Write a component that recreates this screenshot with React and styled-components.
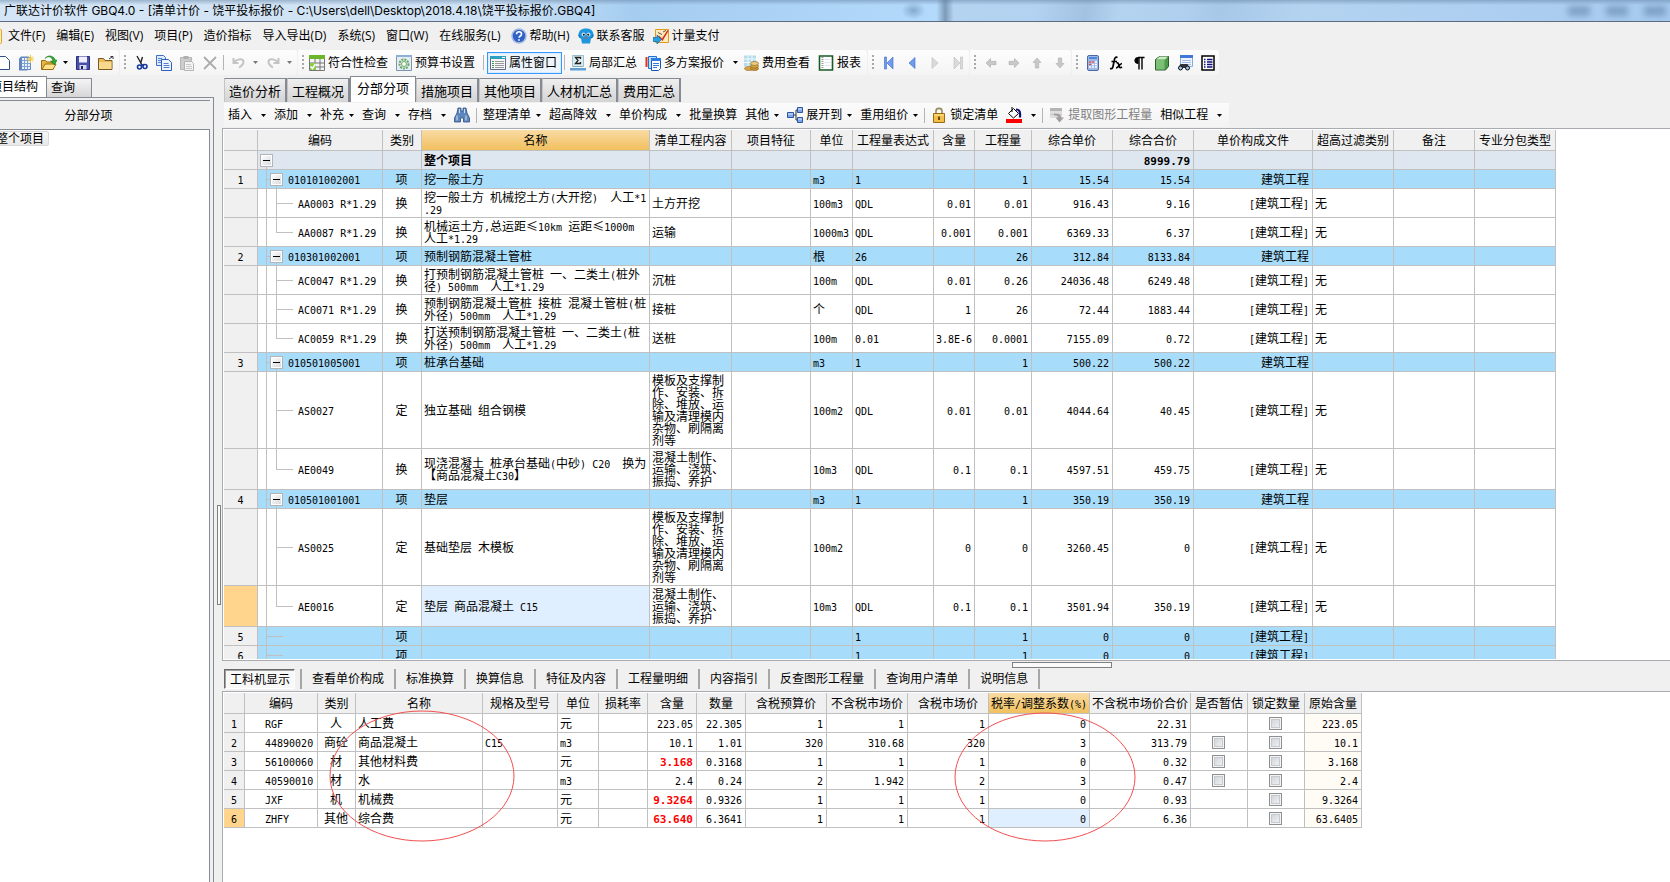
import React, { useState } from 'react';
import styled, { createGlobalStyle, css } from 'styled-components';

const GlobalStyle = createGlobalStyle`
  * {
    box-sizing: border-box;
  }

  body {
    margin: 0;
    background: #f0f0f0;
    color: #000;
    font-family: "Open Sans", "Noto Sans CJK SC", sans-serif;
    font-size: 12px;
    line-height: 16px;
  }

  button {
    margin: 0;
    padding: 0;
    border: 0;
    background: none;
    color: inherit;
    font: inherit;
    white-space: nowrap;
  }
`;

const Window = styled.div`
  display: flex;
  flex-direction: column;
  height: 100vh;
  overflow: hidden;
`;

/* ---------- title bar ---------- */

const TitleBar = styled.header`
  flex: none;
  display: flex;
  align-items: center;
  justify-content: space-between;
  height: 22px;
  padding: 0 4px;
  overflow: hidden;
  border-bottom: 1px solid #5d6b80;
  background:
    linear-gradient(180deg, rgba(90, 120, 155, 0.45) 0, rgba(255, 255, 255, 0) 5px),
    radial-gradient(ellipse 12px 9px at 54.7% 50%, rgba(90, 125, 165, 0.5), transparent),
    linear-gradient(90deg, transparent 56.1%, rgba(70, 95, 125, 0.5) 56.6%, transparent 57.1%),
    linear-gradient(100deg, #d3e5f6 0%, #cfe2f5 30%, #a5cdf0 38%, #b3d9fb 56%, #b4d3f1 57%, #b3d2f1 62%, #a3c2e2 65%, #b4d3f1 67%, #b0cfee 71%, #a8c8e8 73%, #b4d3f1 78%, #a6caef 100%);
`;

const Title = styled.h1`
  margin: 0;
  font-family: Inter, "Noto Sans CJK SC", sans-serif;
  font-size: 12px;
  font-weight: 400;
  line-height: 20px;
  white-space: pre;
`;

const Ghost = styled.span`
  display: flex;
  gap: 16px;
  opacity: 0.7;
  filter: blur(3px);

  i {
    width: 22px;
    height: 10px;
    background: #6d8fb5;
  }
`;

/* ---------- menus and toolbars ---------- */

const MenuBar = styled.nav`
  flex: none;
  display: flex;
  align-items: center;
  height: 28px;
`;

const DocumentEdge = styled.span`
  width: 2px;
  height: 15px;
  margin-right: 1px;
  border: 1px solid #e0a530;
  border-left: 0;
  border-radius: 0 2px 2px 0;
  background: #fff0b8;
`;

const MenuItem = styled.button`
  display: flex;
  align-items: center;
  gap: 3px;
  padding: ${props => (props.$icon ? '0 4px' : '0 6px 0 5px')};
`;

const ToolRow = styled.div`
  flex: none;
  display: flex;
  gap: 1px;
  height: 26px;
`;

const ToolGroup = styled.div`
  display: flex;
  align-items: center;
  height: 25px;
  padding-right: ${props => (props.$flush ? 0 : 2)}px;
  border-radius: 0 3px 3px 0;
  background: linear-gradient(#fdfdfd, #f4f4f4);

  ${props => props.$cut && 'margin-left: -9px;'}
`;

const Grip = styled.span`
  width: 2px;
  height: 15px;
  margin: 0 3px 0 4px;
  background: repeating-linear-gradient(#a8a8a8 0 2px, transparent 2px 4px);
`;

const Divider = styled.span`
  width: 1px;
  height: 15px;
  margin: 0 ${props => (props.$narrow ? 2 : 3)}px 0 2px;
  background: #b4b4b4;
`;

const IconButton = styled.button`
  display: flex;
  align-items: center;
  justify-content: center;
  width: 23px;
  height: 22px;
`;

const CaretButton = styled.button`
  display: flex;
  align-items: center;
  justify-content: center;
  width: 11px;
  height: 22px;
`;

const LabelButton = styled.button`
  display: flex;
  align-items: center;
  gap: 3px;
  height: 22px;
  padding: 0 6px 0 2px;

  ${props => props.$checked && css`
    padding: 0 4px 0 2px;
    border: 1px solid #3399ff;
    box-shadow: inset 0 0 0 1px #d9ebff;
    background: #eef4fb;
  `}
`;

const CommandRow = styled.div`
  flex: none;
  display: flex;
  height: 26px;
  padding-left: 2px;
`;

const CommandBar = styled.div`
  display: flex;
  align-items: center;
  height: 24px;
  margin-top: 1px;
  padding-right: 3px;
  background: linear-gradient(#fbfbfb, #f3f3f3);
`;

const Command = styled.button`
  display: flex;
  align-items: center;
  gap: ${props => (props.$tight ? 5 : 9)}px;
  height: 22px;
  padding: 0 4px;
  color: ${props => (props.disabled ? '#808080' : '#000')};

  span {
    display: flex;
    align-items: center;
    gap: 3px;
  }
`;

/* ---------- frame ---------- */

const Workspace = styled.div`
  flex: 1;
  display: flex;
  min-height: 0;
`;

const SidePane = styled.aside`
  flex: none;
  display: flex;
  flex-direction: column;
  width: 247px;
  margin-left: -33px;
`;

const SideTabs = styled.div`
  display: flex;
  align-items: flex-end;
  height: 21px;
`;

const SideTab = styled.button`
  height: ${props => (props.$active ? 22 : 19)}px;
  margin-bottom: ${props => (props.$active ? -1 : 0)}px;
  padding: ${props => (props.$active ? '0 8px 2px 23px' : '0 16px 0 4px')};
  border-top: 1px solid #868a94;
  border-right: 1px solid #868a94;
  background: ${props => (props.$active ? '#fff' : 'linear-gradient(#f4f4f4, #d6d6d6)')};
`;

const SideBody = styled.div`
  flex: 1;
  display: flex;
  flex-direction: column;
  padding: 2px 3px 0 0;
  border-top: 1px solid #868a94;
  border-right: 1px solid #868a94;
`;

const SideHeading = styled.h2`
  margin: 0;
  height: 29px;
  border-top: 1px solid #868a94;
  font-size: 12px;
  font-weight: 400;
  line-height: 30px;
  text-align: center;
`;

const Tree = styled.ul`
  flex: 1;
  margin: 0;
  padding: 1px 0 0 24px;
  list-style: none;
  border-top: 1px solid #868a94;
  border-right: 1px solid #868a94;
  background: #fff;
`;

const TreeItem = styled.button`
  height: 15px;
  padding: 0 4px;
  border: 1px solid #d9d9d9;
  border-radius: 2px;
  background: linear-gradient(#f8f8f8, #e8e8e8);
  line-height: 13px;
`;

const SideSplitter = styled.div`
  flex: none;
  display: flex;
  align-items: center;
  width: 8px;
  padding: 0 0 0 3px;
  margin-bottom: -6px;

  i {
    width: 4px;
    height: 100px;
    margin-top: 146px;
    border: 1px solid #808080;
    background: #fafafa;
  }
`;

const Main = styled.main`
  flex: 1;
  display: flex;
  flex-direction: column;
  min-width: 0;
`;

const PageTabs = styled.div`
  flex: none;
  display: flex;
  align-items: flex-end;
  height: 26px;
  padding-left: 2px;
`;

const PageTab = styled.button`
  height: 24px;
  padding: 0 4px;
  border-top: 1px solid #868a94;
  border-left: 1px solid #c4c4c4;
  border-right: 2px solid #868a94;
  background: linear-gradient(#efefef, #d4d4d4);
  font-size: 13px;

  ${props => props.$active && css`
    height: 26px;
    padding: 0 6px 4px;
    border-left-color: #868a94;
    border-right-width: 1px;
    background: #fff;
  `}
`;

const GridPane = styled.section`
  position: relative;
  flex: ${props => (props.$docked ? 'none' : '1')};
  height: ${props => (props.$docked ? '191px' : 'auto')};
  min-height: 0;
  padding: 1px 0 1px 1px;
  overflow: hidden;
  border: solid #a8abb0;
  border-width: 1px 0 ${props => (props.$docked ? 0 : 1)}px 1px;
  background: #fff;
`;

const GridClip = styled.div`
  height: 100%;
  overflow: hidden;
`;

const PaneSplitter = styled.div`
  flex: none;
  height: 8px;
  padding: 1px 0 0 790px;

  i {
    display: block;
    width: 100px;
    height: 6px;
    border: 1px solid #808080;
    background: #fafafa;
  }
`;

const DetailTabs = styled.div`
  flex: none;
  display: flex;
  height: 22px;
  padding: 0 0 2px 2px;
`;

const DetailTab = styled.button`
  padding: 0 10px;
  border-right: 2px solid #a6a6a6;

  ${props => props.$active && css`
    margin-right: 5px;
    padding: 1px 4px 0 5px;
    border: 1px solid;
    border-color: #696969 #fff #fff #696969;
    box-shadow: inset 1px 1px 0 #a0a0a0;
    background: #f8f8f8;
  `}

  ${props => props.$afterActive && css`
    border-left: 2px solid #a6a6a6;
  `}
`;

/* ---------- grids ---------- */

const GridTable = styled.table`
  width: ${props => props.$width}px;
  table-layout: fixed;
  border-collapse: separate;
  border-spacing: 0;
  font-family: "Noto Sans CJK SC", sans-serif;
  line-height: 12px;
`;

const HeadCell = styled.th`
  height: 21px;
  padding: 0;
  border-right: 1px solid #c0c0c0;
  border-bottom: 1px solid #c0c0c0;
  background: ${props => (props.$active ? 'linear-gradient(#f9dba4, #f1c05e)' : '#f0f0f0')};
  font-weight: 400;
  white-space: nowrap;
`;

const GridRow = styled.tr`
  height: 19px;
  background: ${props => ({ total: '#dee6f0', item: '#a8dcfb' }[props.$kind] || '#fff')};
  font-weight: ${props => (props.$kind === 'total' ? 700 : 400)};
`;

const Cell = styled.td`
  padding: 2px 3px 2px 2px;
  border-right: 1px solid #c0c0c0;
  border-bottom: 1px solid #c0c0c0;
  text-align: ${props => props.$align || 'left'};
  vertical-align: middle;
  white-space: pre;
  ${props => props.$active && 'background: #e0efff;'}
  ${props => props.$tint && 'background: #fffbf5;'}
  ${props => props.$changed && 'color: #f00; font-weight: 700;'}
`;

const RowHead = styled(Cell)`
  padding: 2px 0;
  background: ${props => (props.$active ? '#ffd48c' : '#f0f0f0')};
  font-weight: 400;
  text-align: center;
`;

const line = 'linear-gradient(#c0c0c0, #c0c0c0)';

// connector lines of the outline, one set per depth
const branches = {
  total: css`
    padding-left: 2px;
    background: ${line} 8px 16px / 1px 100% no-repeat;
  `,
  item: css`
    padding-left: 12px;
    background:
      ${line} 8px 0 / 1px 100% no-repeat,
      ${line} 8px 50% / 5px 1px no-repeat,
      ${line} 18px 16px / 1px 100% no-repeat;
  `,
  blank: css`
    background:
      ${line} 8px 0 / 1px 100% no-repeat,
      ${line} 8px 50% / 17px 1px no-repeat;
  `,
  sub: css`
    padding-left: 40px;
    background:
      ${line} 8px 0 / 1px 100% no-repeat,
      ${line} 18px 0 / 1px 100% no-repeat,
      ${line} 18px 50% / 17px 1px no-repeat;
  `,
  last: css`
    padding-left: 40px;
    background:
      ${line} 8px 0 / 1px 100% no-repeat,
      ${line} 18px 0 / 1px 50% no-repeat,
      ${line} 18px 50% / 17px 1px no-repeat;
  `,
};

const CodeCell = styled(Cell)`
  ${props => branches[props.$branch]}
  ${props => props.$plain && 'padding-left: 20px;'}
`;

const Outline = styled.div`
  display: flex;
  align-items: center;
  gap: 5px;
`;

const Expander = styled.button`
  width: 13px;
  height: 13px;
  border: 1px solid #b4b4b4;
  box-shadow: inset 0 0 0 1px #fff;
  background: linear-gradient(135deg, #fff, #d4d8dc);

  &::after {
    content: '';
    display: block;
    width: 7px;
    height: 1px;
    margin: 0 auto;
    background: #000;
  }
`;

const Latin = styled.span`
  font-family: "DejaVu Sans Mono", monospace;
  font-size: ${props => (props.$bold ? 11 : 10)}px;
  line-height: 0;
`;

const Check = styled.input`
  appearance: none;
  display: block;
  width: 13px;
  height: 13px;
  margin: 0 auto;
  border: 1px solid #8e8f8f;
  box-shadow: inset 0 0 0 1px #f4f4f4, inset 0 0 0 2px #c4cad0;
  background: linear-gradient(135deg, #cbcfd5, #f6f6f6);

  &:checked {
    background: #4a6f9c;
  }
`;

const Marks = styled.svg`
  position: absolute;
  top: 0;
  left: 0;
  width: 100%;
  height: 100%;
  pointer-events: none;
`;

/* ---------- icons ---------- */

const shapes = {
  doc: (
    <path d="M3.500 1.500h7l4 4v9h-11z" fill="#fff" stroke="#2f4f86" />
  ),
  newGrid: (
    <>
      <path d="M1 3.500l2-2h8v12l-2 2H1z" fill="#5f86c0" />
      <path d="M3.500 2.500h9v12h-9z" fill="#e9f1fb" stroke="#5f86c0" />
      <path d="M3.500 5.500h9M3.500 8.500h9M3.500 11.500h9M6.500 2.500v12M9.500 2.500v12" stroke="#7f9fd0" />
      <path d="M12.500 0v8M8.500 4h8M10 1.500l5 5M15 1.500l-5 5" stroke="#ecc840" />
    </>
  ),
  open: (
    <>
      <path d="M.5 14.500v-9h4l1.500 1.500h6v7.500z" fill="#e8b83e" stroke="#9a6d12" />
      <path d="M1 14.500l3-5.500h11l-3 5.500z" fill="#ffe28a" stroke="#9a6d12" />
      <path d="M4 3.500c3-3 7-2 8 2.500h-2.500l4 4 2.500-5-1.500.5C13.500 1 7-1 4 3.500z" fill="#2ea62e" stroke="#187a18" strokeWidth=".6" />
    </>
  ),
  save: (
    <>
      <path d="M1.500 1.500h13v13h-13z" fill="#4a50a8" stroke="#2a2e80" />
      <path d="M4 1.500h8v6H4z" fill="#eef" />
      <path d="M4.500 10h7v4.500h-7z" fill="#d4d8e8" />
      <path d="M6 11h2v3H6z" fill="#1c2070" />
    </>
  ),
  folder: (
    <>
      <path d="M.5 3.500h5l1.500 2h7v9H.500z" fill="#e9bb58" stroke="#7a5a20" />
      <path d="M1 7h12.500v7H1z" fill="#f7d88c" />
      <path d="M11 4l3-2M12.500 1.500H15V4" stroke="#333" />
    </>
  ),
  cut: (
    <>
      <path d="M4 1l5 9M9.500 2L7.500 8.500" stroke="#222" strokeWidth="1.400" />
      <circle cx="6.500" cy="12" r="2" stroke="#173a9c" strokeWidth="1.600" />
      <circle cx="12" cy="11.500" r="2" stroke="#173a9c" strokeWidth="1.600" />
      <path d="M8 10.500l3-1" stroke="#173a9c" strokeWidth="1.400" />
    </>
  ),
  copy: (
    <>
      <path d="M.5.500h7l2 2v8h-9z" fill="#dfeafa" stroke="#3b6ec4" />
      <path d="M5.500 4.500h7l3 3v8h-10z" fill="#eef4ff" stroke="#2f5db8" />
      <path d="M7.500 8.500h5M7.500 10.500h6M7.500 12.500h6M2 3.500h4M2 5.500h3M2 7.500h3" stroke="#4f7fd0" />
    </>
  ),
  paste: (
    <>
      <path d="M1.500 2.500h11v12h-11z" fill="#cdcdcd" stroke="#b4b4b4" />
      <path d="M4.500 1h5v3h-5z" fill="#b0b0b0" />
      <path d="M5.500 6.500h7l2 2v7h-9z" fill="#f4f4f4" stroke="#b4b4b4" />
      <path d="M7 9.500h5M7 11.500h6M7 13.500h6" stroke="#c8c8c8" />
    </>
  ),
  remove: <path d="M2 2l12 12M14 2L2 14" stroke="#ababab" strokeWidth="1.800" />,
  undo: <path d="M2.500 3v5h5M3 7.500c3-4 9-4 9.500-1 .3 3-2 4.500-4.500 6" stroke="#c4c4c4" strokeWidth="2" />,
  redo: <path d="M13.500 3v5h-5M13 7.500c-3-4-9-4-9.500-1-.3 3 2 4.500 4.500 6" stroke="#c4c4c4" strokeWidth="2" />,
  verify: (
    <>
      <path d="M.5.500h15v15H.500z" fill="#f4f4f4" stroke="#777" />
      <path d="M0 0h16v4H0z" fill="#6cb52d" />
      <path d="M0 8h16M0 12h16M6 4v12M11 4v12" stroke="#777" />
      <path d="M1 8h6v7H1z" fill="#8ccb48" />
      <path d="M1.500 11.500l2 2 3-4.500" stroke="#fff" strokeWidth="1.500" />
    </>
  ),
  settings: (
    <>
      <path d="M.5.500h15v15H.500z" fill="#e6edf5" stroke="#7f95b2" />
      <path d="M0 0h16v2H0z" fill="#8eb0d8" />
      <circle cx="8" cy="9" r="4.500" stroke="#66a860" strokeWidth="2" strokeDasharray="2 1" />
      <circle cx="8" cy="9" r="2.500" fill="#fff" stroke="#66a860" />
    </>
  ),
  panel: (
    <>
      <path d="M.5 1.500h15v13H.500z" fill="#f7f7f7" stroke="#668" />
      <path d="M0 1h16v3H0z" fill="#2f9fc4" />
      <path d="M12 2.500h3" stroke="#fff" />
      <path d="M2 6.500h2M2 8.500h2M2 10.500h2M2 12.500h2" stroke="#3a9a50" />
      <path d="M5 6.500h9M5 8.500h9M5 10.500h9M5 12.500h9" stroke="#9a9a9a" />
    </>
  ),
  partSum: (
    <>
      <path d="M2.500.500h11v11h-11z" fill="#dcecf0" stroke="#9ac0cc" />
      <path d="M10.500 4V2.500H5.500L8 5.500l-2.500 3h5V7" stroke="#222" strokeWidth="1.300" />
      <path d="M0 13h16v2.500H0z" fill="#5f9fd4" />
      <path d="M3 11.500h10" stroke="#7fa8b8" />
    </>
  ),
  plans: (
    <>
      <path d="M1.500 2v10" stroke="#e03020" strokeWidth="2" />
      <path d="M3.500 1.500h8v12h-8z" fill="#bfe0ff" stroke="#1f70d8" />
      <path d="M6.500 3.500h9v10l-2 2h-7z" fill="#fff" stroke="#1658b8" />
      <path d="M6 3h10v3H6z" fill="#2f7be0" />
      <path d="M8 8.500h6M8 10.500h6M8 12.500h4" stroke="#2f7be0" />
    </>
  ),
  costs: (
    <>
      <path d="M1 .5h12v11H1z" fill="#b4dcec" />
      <path d="M1 4h12M1 7.500h12M5 .5v11M9 .5v11" stroke="#f4fafc" />
      <ellipse cx="6" cy="13.500" rx="4.500" ry="2" fill="#d9a646" stroke="#a07830" strokeWidth=".7" />
      <ellipse cx="11.500" cy="13.500" rx="4" ry="2" fill="#c8903a" stroke="#8f6820" strokeWidth=".7" />
      <ellipse cx="11.500" cy="11" rx="4" ry="2" fill="#d9a646" stroke="#8f6820" strokeWidth=".7" />
      <ellipse cx="11.500" cy="8.500" rx="4" ry="2" fill="#eccb80" stroke="#8f6820" strokeWidth=".7" />
    </>
  ),
  report: (
    <>
      <path d="M1.500 1h13v14h-13z" fill="#fff" stroke="#1a5c26" strokeWidth="1.600" />
      <path d="M4.500 2v12" stroke="#9a9a9a" strokeDasharray="1 1" strokeWidth="2" />
      <path d="M6.500 4.500h6M6.500 7.500h6M6.500 10.500h6" stroke="#dce4ec" />
    </>
  ),
  first: <path d="M3.500 2h2v12h-2zM12 2v12L6 8z" fill="#6f9cec" stroke="#3a68c8" strokeWidth=".6" />,
  prev: <path d="M11 2.500v11L5 8z" fill="#6f9cec" stroke="#3a68c8" strokeWidth=".6" />,
  next: <path d="M5 2.500v11L11 8z" fill="#dadada" stroke="#bdbdbd" strokeWidth=".6" />,
  end: <path d="M4 2v12l6-6zM10.500 2h2v12h-2z" fill="#dadada" stroke="#bdbdbd" strokeWidth=".6" />,
  left: <path d="M3 8l4.500-4.500v2.800H13v3.400H7.500v2.800z" fill="#c8c8c8" stroke="#acacac" strokeWidth=".6" />,
  right: <path d="M13 8L8.500 3.500v2.800H3v3.400h5.500v2.800z" fill="#c8c8c8" stroke="#acacac" strokeWidth=".6" />,
  up: <path d="M8 3l4 4.500H9.700V13H6.300V7.500H4z" fill="#c8c8c8" stroke="#acacac" strokeWidth=".6" />,
  down: <path d="M8 13l4-4.500H9.700V3H6.300v5.500H4z" fill="#c8c8c8" stroke="#acacac" strokeWidth=".6" />,
  calc: (
    <>
      <rect x="2.500" y=".5" width="11" height="15" rx="1.500" fill="#9db8e4" stroke="#4a68a4" />
      <path d="M4 2h8v2H4z" fill="#4f84e0" />
      <path d="M4 7h8M4 9.500h8M4 12h8" stroke="#fff" strokeWidth="1.500" strokeDasharray="2 1" />
      <path d="M4 7h2M7 7h2M4 9.500h2" stroke="#d84848" strokeWidth="1.500" />
    </>
  ),
  fx: (
    <path d="M9.500 2.500c-1.800-.8-2.800 0-3.300 3L5 11.500c-.4 2-1.400 2.500-3 2M3.500 6.500h5.500M8.500 8c2-.5 2 1 2.500 3s1.500 2 3 1M14 8.500c-2 0-4 4.500-6 4.500" stroke="#000" strokeWidth="1.700" />
  ),
  pilcrow: (
    <>
      <path d="M7.500 2C2 2 2 9 7.500 9z" fill="#000" />
      <path d="M7 2.500h6.500M8 2v12.500M11 2v12.500" stroke="#000" strokeWidth="1.400" />
    </>
  ),
  book: (
    <>
      <path d="M1.500 4.500l4-3h9v10l-3 3.500h-10z" fill="#4f9a4a" stroke="#28602a" />
      <path d="M2 4.500l4-3h8l-3 3z" fill="#cdeac4" />
      <path d="M2 5h8.500v9.500H2z" fill="#7cc078" />
    </>
  ),
  find: (
    <>
      <path d="M3.500.500h12v11h-12z" fill="#eef4ff" stroke="#8aa8d8" />
      <path d="M3 0h13v3H3z" fill="#3f78d8" />
      <path d="M5 5.500h9M5 7.500h9M5 9.500h9" stroke="#a8bce0" />
      <path d="M3.500 9h7l2 4H1z" fill="#333" />
      <circle cx="3.500" cy="13" r="2" fill="#9cc4f4" stroke="#111" />
      <circle cx="10.500" cy="13" r="2" fill="#9cc4f4" stroke="#111" />
    </>
  ),
  list: (
    <>
      <path d="M2 1h12v14H2z" fill="#fff" stroke="#000" strokeWidth="1.500" />
      <path d="M4 4.500h1.500M4 7h1.500M4 9.500h1.500M4 12h1.500M7 4.500h5.500M7 7h5.500M7 9.500h5.500M7 12h5.500" stroke="#11117a" strokeWidth="1.300" />
    </>
  ),
  help: (
    <>
      <circle cx="8" cy="8" r="7" fill="#2f62c8" stroke="#a8bce0" strokeWidth="1.500" />
      <path d="M5.500 6.200c0-3.500 5.200-3 5 0 0 1.800-2.400 1.800-2.400 3.600M8 11.200v1.500" stroke="#fff" strokeWidth="1.700" />
    </>
  ),
  service: (
    <>
      <path d="M.5 7.500C.5 3 3 .5 8 .5s7.500 2.500 7.500 7c0 2-1.500 3-2.500 3l-1 5H4l-1-5c-1 0-2.500-1-2.500-3z" fill="#1e96de" />
      <path d="M1 6.500c0 2 .5 3 2 3M15 6.500c0 2-.5 3-2 3" stroke="#1068b0" />
      <circle cx="5.500" cy="6.500" r="2" fill="#c4dcee" />
      <circle cx="10.500" cy="6.500" r="2" fill="#c4dcee" />
      <circle cx="5.800" cy="6.800" r="1" fill="#222" />
      <circle cx="10.200" cy="6.800" r="1" fill="#222" />
      <path d="M6.500 10h3" stroke="#d05040" />
    </>
  ),
  payment: (
    <>
      <path d="M2.500 1.500h13v13h-13z" fill="#ffe9b8" stroke="#e09a20" />
      <path d="M6 7.500l3 3L14.500 2l1 1L9.500 13 5 8.500z" fill="#d8301c" />
      <path d="M5 4.500l4 2M10 4l3-1.500" stroke="#555" />
      <path d="M0 9.500h4V7l4.500 4.500L4 16v-2.500H0z" fill="#28a0e0" stroke="#1268a8" strokeWidth=".7" />
    </>
  ),
  binoculars: (
    <>
      <path d="M4 1h3v3h2V1h3l1 5 2.500 5v4h-6v-4h-3v4h-6v-4L3 6z" fill="#5f86bc" stroke="#2d4f86" strokeWidth=".8" />
      <path d="M3 8.500v5M12 8.500v5M5.500 2v4M10.500 2v4" stroke="#cfdff4" />
    </>
  ),
  expand: (
    <>
      <path d="M6 8h3V3h3M9 8v5h3" stroke="#333" />
      <path d="M.5 5.500h6v5h-6zM10.500.500h5v5h-5zM10.500 10.500h5v5h-5z" fill="#7fa6ea" stroke="#2f559c" />
      <path d="M1 7h5M11 2h4M11 12h4" stroke="#dce8ff" />
    </>
  ),
  lock: (
    <>
      <path d="M5 7V4c0-3.500 6-3.500 6 0v3" stroke="#9a8a60" strokeWidth="1.600" />
      <path d="M2.500 6.500h11v9h-11z" fill="#f2bf48" stroke="#9c6a10" />
      <path d="M3 8h10" stroke="#ffe6a0" />
      <path d="M8 9.500v3.500" stroke="#5c3c00" strokeWidth="1.800" />
    </>
  ),
  fill: (
    <>
      <path d="M2.500 6.500l5-5 5 5-5 4.500z" fill="#fff" stroke="#000" />
      <path d="M6 0v5" stroke="#000" />
      <path d="M10 2.500c4 0 4.500 3 4 8" stroke="#11117a" strokeWidth="2.200" />
      <path d="M0 12h16v4H0z" fill="#f00" />
    </>
  ),
  extract: (
    <>
      <path d="M1 1h12v10H1z" fill="#dedede" />
      <path d="M1 1h12v3H1z" fill="#b4b4b4" />
      <path d="M1 7.500h12" stroke="#c4c4c4" />
      <path d="M5 6.500c5 0 7 1.500 7 4h3L10.500 15.500 6.500 10.500H9c0-1.500-1-2-4-2z" fill="#a0a0a0" />
    </>
  ),
};

const Icon = ({ name, label }) => (
  <svg width="16" height="16" viewBox="0 0 16 16" fill="none" role="img" aria-label={label || name}>
    {shapes[name]}
  </svg>
);

const Caret = ({ muted }) => (
  <svg width="5" height="3" viewBox="0 0 5 3" aria-hidden="true">
    <path d="M0 0h5L2.500 3z" fill={muted ? '#777' : '#000'} />
  </svg>
);

/* ---------- data ---------- */

const menus = [
  '文件(F)', '编辑(E)', '视图(V)', '项目(P)', '造价指标', '导入导出(D)', '系统(S)', '窗口(W)', '在线服务(L)',
  ['help', '帮助(H)'], ['service', '联系客服'], ['payment', '计量支付'],
];

const pageTabs = ['造价分析', '工程概况', '分部分项', '措施项目', '其他项目', '人材机汇总', '费用汇总'];

const detailTabs = [
  '工料机显示', '查看单价构成', '标准换算', '换算信息', '特征及内容',
  '工程量明细', '内容指引', '反查图形工程量', '查询用户清单', '说明信息',
];

const commands = [
  { text: '插入', caret: true },
  { text: '添加', caret: true },
  { text: '补充', caret: true, tight: true },
  { text: '查询', caret: true },
  { text: '存档', caret: true },
  { icon: 'binoculars', label: '查找' },
  { divider: true },
  { text: '整理清单', caret: true, tight: true },
  { text: '超高降效', caret: true },
  { text: '单价构成', caret: true },
  { text: '批量换算' },
  { text: '其他', caret: true, tight: true },
  { icon: 'expand', text: '展开到', caret: true, tight: true },
  { text: '重用组价', caret: true, tight: true },
  { divider: true },
  { icon: 'lock', text: '锁定清单' },
  { icon: 'fill', label: '填充颜色', caret: true },
  { divider: true },
  { icon: 'extract', text: '提取图形工程量', disabled: true },
  { text: '相似工程', caret: true },
];

const billColumns = [
  { width: 34 },
  { label: '编码', width: 125 },
  { label: '类别', width: 39, align: 'center' },
  { label: '名称', width: 228, active: true },
  { label: '清单工程内容', width: 82 },
  { label: '项目特征', width: 79 },
  { label: '单位', width: 42 },
  { label: '工程量表达式', width: 81 },
  { label: '含量', width: 41, align: 'right' },
  { label: '工程量', width: 57, align: 'right' },
  { label: '综合单价', width: 81, align: 'right' },
  { label: '综合合价', width: 81, align: 'right' },
  { label: '单价构成文件', width: 119, align: 'right' },
  { label: '超高过滤类别', width: 81 },
  { label: '备注', width: 81 },
  { label: '专业分包类型', width: 81 },
];

const formwork = '模板及支撑制\n作、安装、拆\n除、堆放、运\n输及清理模内\n杂物、刷隔离\n剂等';
const concrete = '混凝土制作、\n运输、浇筑、\n振捣、养护';

const billRows = [
  { kind: 'total', cells: ['', '', '整个项目', '', '', '', '', '', '', '', '8999.79', '', ''] },
  { kind: 'item', no: '1', cells: ['010101002001', '项', '挖一般土方', '', '', 'm3', '1', '', '1', '15.54', '15.54', '建筑工程', ''] },
  { kind: 'sub', cells: ['AA0003 R*1.29', '换', '挖一般土方 机械挖土方(大开挖)  人工*1\n.29', '土方开挖', '', '100m3', 'QDL', '0.01', '0.01', '916.43', '9.16', '[建筑工程]', '无'] },
  { kind: 'last', cells: ['AA0087 R*1.29', '换', '机械运土方,总运距≤10km 运距≤1000m\n人工*1.29', '运输', '', '1000m3', 'QDL', '0.001', '0.001', '6369.33', '6.37', '[建筑工程]', '无'] },
  { kind: 'item', no: '2', cells: ['010301002001', '项', '预制钢筋混凝土管桩', '', '', '根', '26', '', '26', '312.84', '8133.84', '建筑工程', ''] },
  { kind: 'sub', cells: ['AC0047 R*1.29', '换', '打预制钢筋混凝土管桩 一、二类土(桩外\n径) 500mm  人工*1.29', '沉桩', '', '100m', 'QDL', '0.01', '0.26', '24036.48', '6249.48', '[建筑工程]', '无'] },
  { kind: 'sub', cells: ['AC0071 R*1.29', '换', '预制钢筋混凝土管桩 接桩 混凝土管桩(桩\n外径) 500mm  人工*1.29', '接桩', '', '个', 'QDL', '1', '26', '72.44', '1883.44', '[建筑工程]', '无'] },
  { kind: 'last', cells: ['AC0059 R*1.29', '换', '打送预制钢筋混凝土管桩 一、二类土(桩\n外径) 500mm  人工*1.29', '送桩', '', '100m', '0.01', '3.8E-6', '0.0001', '7155.09', '0.72', '[建筑工程]', '无'] },
  { kind: 'item', no: '3', cells: ['010501005001', '项', '桩承台基础', '', '', 'm3', '1', '', '1', '500.22', '500.22', '建筑工程', ''] },
  { kind: 'sub', cells: ['AS0027', '定', '独立基础 组合钢模', formwork, '', '100m2', 'QDL', '0.01', '0.01', '4044.64', '40.45', '[建筑工程]', '无'] },
  { kind: 'last', cells: ['AE0049', '换', '现浇混凝土 桩承台基础(中砂) C20  换为\n【商品混凝土C30】', concrete, '', '10m3', 'QDL', '0.1', '0.1', '4597.51', '459.75', '[建筑工程]', '无'] },
  { kind: 'item', no: '4', cells: ['010501001001', '项', '垫层', '', '', 'm3', '1', '', '1', '350.19', '350.19', '建筑工程', ''] },
  { kind: 'sub', cells: ['AS0025', '定', '基础垫层 木模板', formwork, '', '100m2', '', '0', '0', '3260.45', '0', '[建筑工程]', '无'] },
  { kind: 'last', current: true, cells: ['AE0016', '定', '垫层 商品混凝土 C15', concrete, '', '10m3', 'QDL', '0.1', '0.1', '3501.94', '350.19', '[建筑工程]', '无'] },
  { kind: 'item', no: '5', cells: ['', '项', '', '', '', '', '1', '', '1', '0', '0', '[建筑工程]', ''] },
  { kind: 'item', no: '6', cells: ['', '项', '', '', '', '', '1', '', '1', '0', '0', '[建筑工程]', ''] },
];

const resourceColumns = [
  { width: 21 },
  { label: '编码', width: 73 },
  { label: '类别', width: 38, align: 'center' },
  { label: '名称', width: 127 },
  { label: '规格及型号', width: 75 },
  { label: '单位', width: 41 },
  { label: '损耗率', width: 49 },
  { label: '含量', width: 49, align: 'right' },
  { label: '数量', width: 49, align: 'right' },
  { label: '含税预算价', width: 81, align: 'right' },
  { label: '不含税市场价', width: 81, align: 'right' },
  { label: '含税市场价', width: 81, align: 'right' },
  { label: '税率/调整系数(%)', width: 101, align: 'right', active: true },
  { label: '不含税市场价合价', width: 101, align: 'right' },
  { label: '是否暂估', width: 57 },
  { label: '锁定数量', width: 57 },
  { label: '原始含量', width: 57, align: 'right' },
];

const resourceRows = [
  { cells: ['RGF', '人', '人工费', '', '元', '', '223.05', '22.305', '1', '1', '1', '0', '22.31'], origin: '223.05' },
  { cells: ['44890020', '商砼', '商品混凝土', 'C15', 'm3', '', '10.1', '1.01', '320', '310.68', '320', '3', '313.79'], origin: '10.1', estimate: true },
  { cells: ['56100060', '材', '其他材料费', '', '元', '', '3.168', '0.3168', '1', '1', '1', '0', '0.32'], origin: '3.168', estimate: true, changed: true },
  { cells: ['40590010', '材', '水', '', 'm3', '', '2.4', '0.24', '2', '1.942', '2', '3', '0.47'], origin: '2.4', estimate: true },
  { cells: ['JXF', '机', '机械费', '', '元', '', '9.3264', '0.9326', '1', '1', '1', '0', '0.93'], origin: '9.3264', changed: true },
  { cells: ['ZHFY', '其他', '综合费', '', '元', '', '63.640', '6.3641', '1', '1', '1', '0', '6.36'], origin: '63.6405', changed: true, current: true },
];

/* ---------- components ---------- */

// half-width characters take exactly half of a full-width one
const GridText = ({ text, bold }) =>
  text.split(/([\x20-\x7e]+)/).map((part, i) =>
    i % 2 ? <Latin key={i} $bold={bold}>{part}</Latin> : part
  );

const GridHead = ({ columns }) => (
  <>
    <colgroup>
      {columns.map((col, i) => <col key={i} style={{ width: col.width }} />)}
    </colgroup>
    <thead>
      <tr>
        {columns.map((col, i) => (
          <HeadCell key={i} $active={col.active}>
            {col.label && <GridText text={col.label} />}
          </HeadCell>
        ))}
      </tr>
    </thead>
  </>
);

const totalWidth = columns => columns.reduce((sum, col) => sum + col.width, 0);

const BillGrid = () => (
  <GridTable $width={totalWidth(billColumns)}>
    <GridHead columns={billColumns} />
    <tbody>
      {billRows.map((row, r) => {
        const [code, ...rest] = row.cells;
        const hasExpander = row.kind === 'total' || (row.kind === 'item' && code);
        return (
          <GridRow key={r} $kind={row.kind}>
            <RowHead $active={row.current}>{row.no && <GridText text={row.no} />}</RowHead>
            <CodeCell $branch={row.kind === 'item' && !code ? 'blank' : row.kind}>
              <Outline>
                {hasExpander && <Expander aria-label="折叠" />}
                <span><GridText text={code} /></span>
              </Outline>
            </CodeCell>
            {rest.map((text, i) => (
              <Cell key={i} $align={billColumns[i + 2].align} $active={row.current && i === 1}>
                <GridText text={text} bold={row.kind === 'total'} />
              </Cell>
            ))}
            <Cell />
            <Cell />
          </GridRow>
        );
      })}
    </tbody>
  </GridTable>
);

const ResourceGrid = () => (
  <GridTable $width={totalWidth(resourceColumns)}>
    <GridHead columns={resourceColumns} />
    <tbody>
      {resourceRows.map((row, r) => {
        const [code, ...rest] = row.cells;
        return (
          <GridRow key={code}>
            <RowHead $active={row.current}><GridText text={String(r + 1)} /></RowHead>
            <CodeCell $plain><GridText text={code} /></CodeCell>
            {rest.map((text, i) => (
              <Cell
                key={i}
                $align={resourceColumns[i + 2].align}
                $active={row.current && i === 10}
                $changed={row.changed && i === 5}
              >
                <GridText text={text} bold={row.changed && i === 5} />
              </Cell>
            ))}
            <Cell>{row.estimate && <Check type="checkbox" aria-label={`是否暂估 ${code}`} />}</Cell>
            <Cell><Check type="checkbox" aria-label={`锁定数量 ${code}`} /></Cell>
            <Cell $align="right" $tint><GridText text={row.origin} /></Cell>
          </GridRow>
        );
      })}
    </tbody>
  </GridTable>
);

const Tool = ({ name, label }) => (
  <IconButton aria-label={label}><Icon name={name} label={label} /></IconButton>
);

const StandardToolbar = () => (
  <ToolRow>
    <ToolGroup $cut>
      <Tool name="doc" label="新建" />
      <Tool name="newGrid" label="新建清单" />
      <Tool name="open" label="打开" />
      <CaretButton aria-label="最近文件"><Caret /></CaretButton>
      <Tool name="save" label="保存" />
      <Tool name="folder" label="另存为" />
    </ToolGroup>
    <ToolGroup>
      <Grip />
      <Tool name="cut" label="剪切" />
      <Tool name="copy" label="复制" />
      <Tool name="paste" label="粘贴" />
      <Tool name="remove" label="删除" />
      <Divider />
      <Tool name="undo" label="撤销" />
      <CaretButton aria-label="撤销列表"><Caret muted /></CaretButton>
      <Tool name="redo" label="恢复" />
      <CaretButton aria-label="恢复列表"><Caret muted /></CaretButton>
    </ToolGroup>
    <ToolGroup $flush>
      <Grip />
      <LabelButton><Icon name="verify" />符合性检查</LabelButton>
      <LabelButton><Icon name="settings" />预算书设置</LabelButton>
      <Divider />
      <LabelButton $checked aria-pressed="true"><Icon name="panel" />属性窗口</LabelButton>
      <Divider />
      <LabelButton><Icon name="partSum" />局部汇总</LabelButton>
      <LabelButton><Icon name="plans" />多方案报价</LabelButton>
      <CaretButton aria-label="多方案报价列表"><Caret /></CaretButton>
      <LabelButton><Icon name="costs" />费用查看</LabelButton>
      <LabelButton><Icon name="report" />报表</LabelButton>
    </ToolGroup>
    <ToolGroup $flush>
      <Grip />
      <Tool name="first" label="首条" />
      <Tool name="prev" label="上一条" />
      <Tool name="next" label="下一条" />
      <Tool name="end" label="末条" />
    </ToolGroup>
    <ToolGroup $flush>
      <Grip />
      <Tool name="left" label="升级" />
      <Tool name="right" label="降级" />
      <Tool name="up" label="上移" />
      <Tool name="down" label="下移" />
    </ToolGroup>
    <ToolGroup $flush>
      <Grip />
      <Tool name="calc" label="计算器" />
      <Tool name="fx" label="函数" />
      <Tool name="pilcrow" label="特殊符号" />
      <Tool name="book" label="图元公式" />
      <Tool name="find" label="查找" />
      <Tool name="list" label="列表" />
    </ToolGroup>
  </ToolRow>
);

const BillToolbar = () => (
  <CommandRow>
    <CommandBar>
      {commands.map((cmd, i) =>
        cmd.divider ? <Divider key={i} $narrow /> : (
          <Command key={i} $tight={cmd.tight} disabled={cmd.disabled} aria-label={cmd.label}>
            <span>
              {cmd.icon && <Icon name={cmd.icon} />}
              {cmd.text}
            </span>
            {cmd.caret && <Caret />}
          </Command>
        )
      )}
    </CommandBar>
  </CommandRow>
);

const App = () => {
  const [page, setPage] = useState('分部分项');
  const [detail, setDetail] = useState('工料机显示');

  return (
    <Window>
      <GlobalStyle />
      <TitleBar>
        <Title>{'广联达计价软件 GBQ4.0 - [清单计价 - 饶平投标报价 - C:\\Users\\dell\\Desktop\\2018.4.18\\饶平投标报价.GBQ4]'}</Title>
        <Ghost aria-hidden="true"><i /><i /><i /></Ghost>
      </TitleBar>
      <MenuBar>
        <DocumentEdge />
        {menus.map(item =>
          Array.isArray(item)
            ? <MenuItem key={item[1]} $icon><Icon name={item[0]} />{item[1]}</MenuItem>
            : <MenuItem key={item}>{item}</MenuItem>
        )}
      </MenuBar>
      <StandardToolbar />
      <Workspace>
        <SidePane>
          <SideTabs>
            <SideTab $active>项目结构</SideTab>
            <SideTab>查询</SideTab>
          </SideTabs>
          <SideBody>
            <SideHeading>分部分项</SideHeading>
            <Tree>
              <li><TreeItem>整个项目</TreeItem></li>
            </Tree>
          </SideBody>
        </SidePane>
        <SideSplitter><i /></SideSplitter>
        <Main>
          <PageTabs>
            {pageTabs.map(tab => (
              <PageTab key={tab} $active={tab === page} onClick={() => setPage(tab)}>{tab}</PageTab>
            ))}
          </PageTabs>
          <BillToolbar />
          <GridPane>
            <GridClip><BillGrid /></GridClip>
          </GridPane>
          <PaneSplitter><i /></PaneSplitter>
          <DetailTabs>
            {detailTabs.map((tab, i) => (
              <DetailTab
                key={tab}
                $active={tab === detail}
                $afterActive={detailTabs[i - 1] === detail}
                onClick={() => setDetail(tab)}
              >
                {tab}
              </DetailTab>
            ))}
          </DetailTabs>
          <GridPane $docked>
            <ResourceGrid />
            <Marks aria-hidden="true">
              <ellipse cx="199" cy="84" rx="92" ry="65" fill="none" stroke="#f25050" />
              <ellipse cx="822" cy="85" rx="90" ry="64" fill="none" stroke="#f25050" />
            </Marks>
          </GridPane>
        </Main>
      </Workspace>
    </Window>
  );
};

export default App;
